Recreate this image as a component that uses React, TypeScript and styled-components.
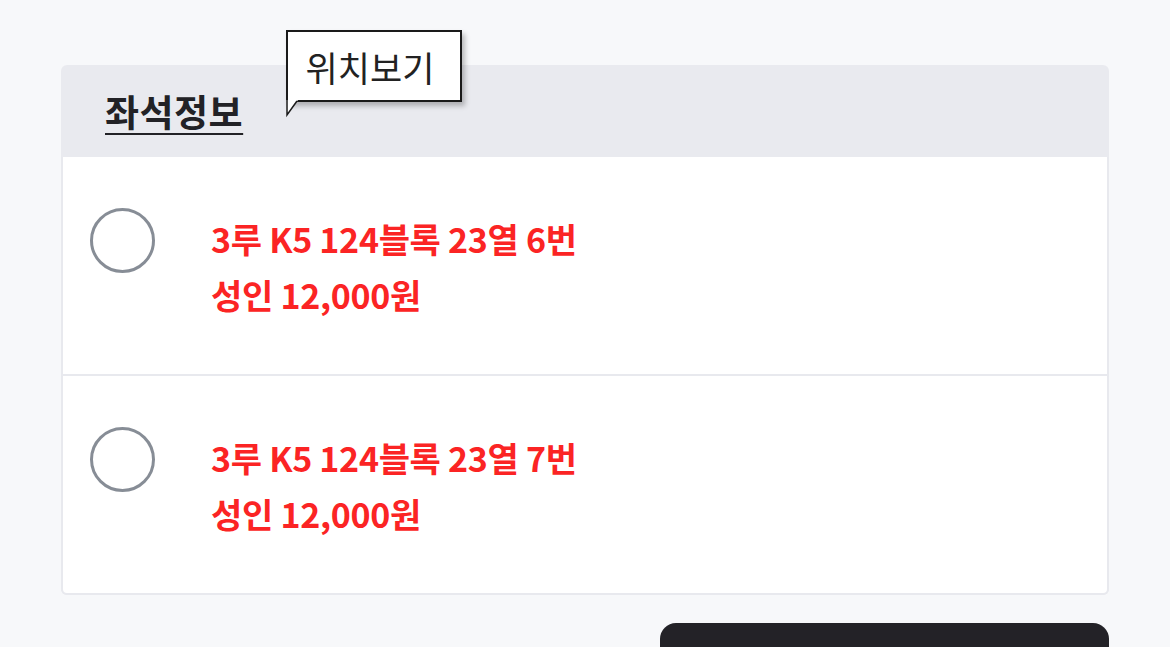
import styled, { createGlobalStyle } from "styled-components";

const GlobalStyle = createGlobalStyle`
  html, body {
    margin: 0;
    padding: 0;
    background: #f7f8fa;
    font-family: "Noto Sans CJK KR", "Noto Sans", sans-serif;
  }
`;

const Page = styled.div`
  padding: 65px 61px 0;
  height: 647px;
  box-sizing: border-box;
  overflow: hidden;
`;

const Card = styled.section`
  border-radius: 6px;
  background: #e9eaef;
`;

const Header = styled.header`
  position: relative;
  height: 92px;
  display: flex;
  align-items: center;
  padding-left: 44px;
`;

const Title = styled.h2`
  margin: 0;
  font-size: 37px;
  font-weight: 700;
  color: #222226;
  text-decoration: underline;
  text-underline-offset: 6px;
  text-decoration-thickness: 2px;
  letter-spacing: 0.5px;
`;

const Bubble = styled.div`
  position: absolute;
  left: 225px;
  top: -35px;
  width: 176px;
  height: 72px;
  box-sizing: border-box;
  padding-right: 8px;
  border: 2px solid #1a1a1a;
  background: #fff;
  box-shadow: 3px 4px 5px rgba(0, 0, 0, 0.25);
  display: flex;
  align-items: center;
  justify-content: center;
  font-size: 35px;
  color: #222;
`;

const Tail = styled.svg`
  position: absolute;
  left: -2px;
  top: 68px;
  width: 14px;
  height: 16px;
  overflow: visible;
`;

const List = styled.ul`
  list-style: none;
  margin: 0;
  padding: 0;
  background: #fff;
  border: 2px solid #e8e9ee;
  border-top: none;
  border-radius: 0 0 6px 6px;
`;

const Row = styled.li<{ $last?: boolean }>`
  display: flex;
  align-items: flex-start;
  height: 166px;
  padding: 51px 0 0 27px;
  border-bottom: ${(p) => (p.$last ? "none" : "2px solid #e8e9ee")};
`;

const Radio = styled.span`
  width: 65px;
  height: 65px;
  box-sizing: border-box;
  border-radius: 50%;
  border: 3px solid #878d96;
  flex-shrink: 0;
`;

const Info = styled.div`
  margin-left: 56px;
  margin-top: 3px;
  color: #fb2424;
  font-size: 34px;
  font-weight: 700;
  line-height: 56px;
  letter-spacing: -0.3px;
`;

const Bottom = styled.div`
  display: flex;
  justify-content: flex-end;
  padding-top: 28px;
`;

const DarkButton = styled.button`
  width: 449px;
  height: 60px;
  border: none;
  border-radius: 16px;
  background: #232227;
`;

const seats = [
  { id: 1, label: "3루 K5 124블록 23열 6번", price: "성인 12,000원" },
  { id: 2, label: "3루 K5 124블록 23열 7번", price: "성인 12,000원" },
];

export default function App() {
  return (
    <Page>
      <GlobalStyle />
      <Card>
        <Header>
          <Title>좌석정보</Title>
          <Bubble>
            위치보기
            <Tail viewBox="0 0 14 16">
              <path d="M0 0 V16 L12 0 Z" fill="#fff" />
              <path d="M1 0 V15 L11 1" fill="none" stroke="#1a1a1a" strokeWidth="1.5" />
            </Tail>
          </Bubble>
        </Header>
        <List>
          {seats.map((s, i) => (
            <Row key={s.id} $last={i === seats.length - 1}>
              <Radio />
              <Info>
                <div>{s.label}</div>
                <div>{s.price}</div>
              </Info>
            </Row>
          ))}
        </List>
      </Card>
      <Bottom>
        <DarkButton />
      </Bottom>
    </Page>
  );
}
